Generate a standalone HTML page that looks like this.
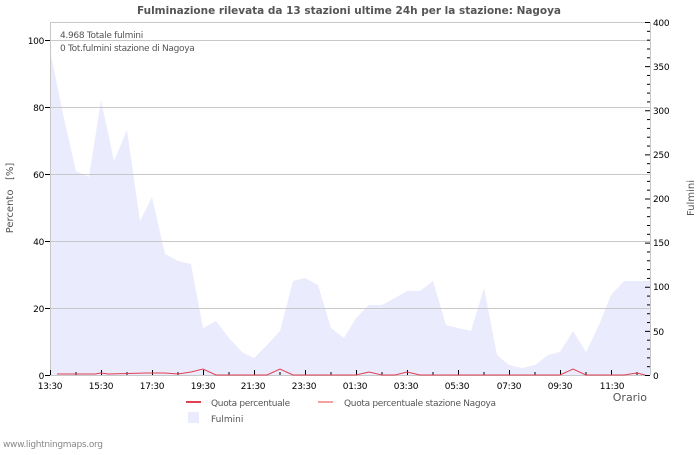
<!DOCTYPE html><html><head><style>body{margin:0;background:#fff}svg text{font-family:"DejaVu Sans","Liberation Sans",sans-serif}</style></head><body>
<svg width="700" height="450" viewBox="0 0 700 450" xmlns="http://www.w3.org/2000/svg">
<rect width="700" height="450" fill="#fff"/>
<text x="137" y="14" font-size="11" font-weight="bold" fill="#555" textLength="424" lengthAdjust="spacingAndGlyphs">Fulminazione rilevata da 13 stazioni ultime 24h per la stazione: Nagoya</text>
<polygon fill="#ebebfe" points="50,375 50,50 63,114 76,171 89,177 101,100 114,161 127,130 140,221 152,197 165,254 178,261 191,264 203,328 216,321 229,338 242,352 254,358 267,345 280,331 293,281 305,278 318,285 331,328 344,338 356,318 369,305 382,305 395,298 407,291 420,291 433,281 446,325 458,328 471,331 484,288 497,355 509,365 522,368 535,365 548,355 560,352 573,331 586,352 599,325 611,295 624,281 637,281 650,281 650,375"/>
<g stroke="#c8c8c8" stroke-width="1">
<line x1="50" y1="40.5" x2="650" y2="40.5"/><line x1="50" y1="107.5" x2="650" y2="107.5"/><line x1="50" y1="174.5" x2="650" y2="174.5"/><line x1="50" y1="241.5" x2="650" y2="241.5"/><line x1="50" y1="308.5" x2="650" y2="308.5"/>
<line x1="50" y1="22.5" x2="650" y2="22.5"/><line x1="50.5" y1="22" x2="50.5" y2="375"/><line x1="650.5" y1="22" x2="650.5" y2="375"/><line x1="50" y1="375.5" x2="650" y2="375.5"/>
</g>
<g stroke="#000" stroke-width="1">
<line x1="45" y1="40.5" x2="50" y2="40.5"/><line x1="45" y1="107.5" x2="50" y2="107.5"/><line x1="45" y1="174.5" x2="50" y2="174.5"/><line x1="45" y1="241.5" x2="50" y2="241.5"/><line x1="45" y1="308.5" x2="50" y2="308.5"/><line x1="45" y1="375.5" x2="50" y2="375.5"/>
</g>
<g id="rt" stroke="#000"></g>
<polyline fill="none" stroke="#e04050" stroke-width="1" points="57,374 70,374 82,374 95,374 101,373 108,374 146,373 165,373 178,374 191,372 203,369 216,375 267,375 280,369 293,375 356,375 369,372 382,375 395,375 407,372 420,375 560,375 573,369 586,375 624,375 637,373 645,375"/>
<g font-size="9" fill="#000" text-anchor="end" letter-spacing="-0.3">
<text x="44" y="44">100</text><text x="44" y="111">80</text><text x="44" y="178">60</text><text x="44" y="245">40</text><text x="44" y="312">20</text><text x="44" y="379">0</text>
</g>
<g font-size="9" fill="#000" letter-spacing="-0.3">
<text x="653" y="26">400</text><text x="653" y="70">350</text><text x="653" y="114">300</text><text x="653" y="158">250</text><text x="653" y="202">200</text><text x="653" y="246">150</text><text x="653" y="290">100</text><text x="653" y="335">50</text><text x="653" y="379">0</text>
</g>
<g font-size="9" fill="#000" text-anchor="middle" letter-spacing="-0.3">
<text x="50" y="389">13:30</text><text x="101" y="389">15:30</text><text x="152" y="389">17:30</text><text x="203" y="389">19:30</text><text x="253" y="389">21:30</text><text x="304" y="389">23:30</text><text x="355" y="389">01:30</text><text x="406" y="389">03:30</text><text x="457" y="389">05:30</text><text x="509" y="389">07:30</text><text x="560" y="389">09:30</text><text x="612" y="389">11:30</text>
</g>
<text x="60" y="38" font-size="9" fill="#555" letter-spacing="-0.3">4.968 Totale fulmini</text>
<text x="60" y="51" font-size="9" fill="#555" letter-spacing="-0.3">0 Tot.fulmini stazione di Nagoya</text>
<text x="13" y="198" font-size="10" fill="#555" text-anchor="middle" transform="rotate(-90 13 198)" xml:space="preserve">Percento   [%]</text>
<text x="694" y="198" font-size="10" fill="#555" text-anchor="middle" transform="rotate(-90 694 198)">Fulmini</text>
<text x="647" y="401" font-size="11" fill="#555" text-anchor="end">Orario</text>
<line x1="186" y1="402" x2="201" y2="402" stroke="#e04050" stroke-width="2"/>
<text x="211" y="406" font-size="9" fill="#555" letter-spacing="-0.3">Quota percentuale</text>
<line x1="318" y1="402" x2="333" y2="402" stroke="#f8a0a0" stroke-width="2"/>
<text x="344" y="406" font-size="9" fill="#555" letter-spacing="-0.3">Quota percentuale stazione Nagoya</text>
<rect x="188" y="412" width="11" height="11" fill="#ebebfe"/>
<text x="211" y="422" font-size="9" fill="#555">Fulmini</text>
<text x="3" y="447" font-size="9" fill="#888" letter-spacing="-0.3">www.lightningmaps.org</text>
</svg>
<script>
var g=document.getElementById('rt'),s='';
for(var i=0;i<=40;i++){var y=375.5-i*8.825;var m=i%5==0;s+='<line x1="'+(m?645:647)+'" y1="'+y+'" x2="650" y2="'+y+'"/>';}
for(var h=0;h<=23;h++){var x=50.5+h*25.5;s+='<line x1="'+x+'" y1="'+(h%2==0?370:372)+'" x2="'+x+'" y2="375"/>';}
g.innerHTML=s;
</script>
</body></html>
